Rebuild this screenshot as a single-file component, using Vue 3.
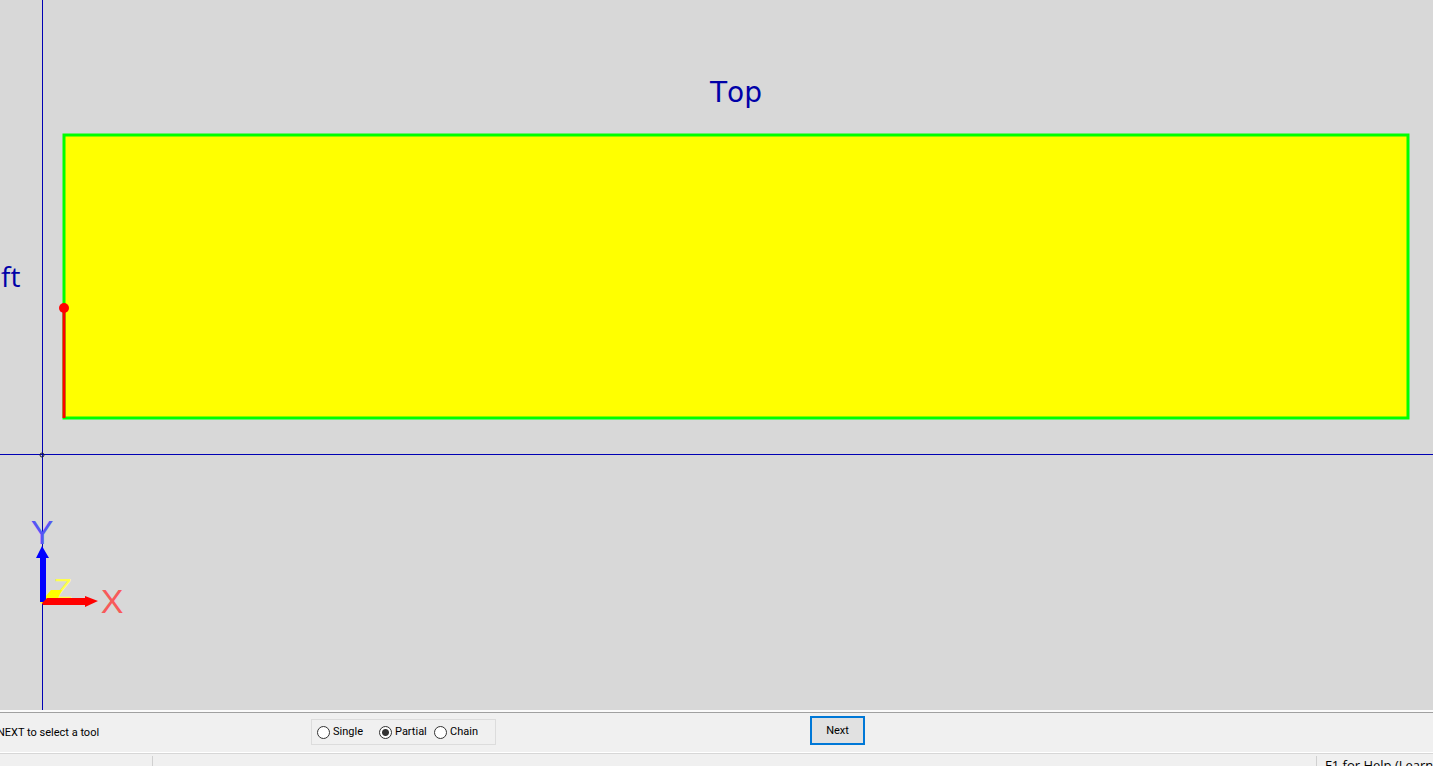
<script setup>
import { ref } from 'vue'

const mode = ref('Partial')
const modes = ['Single', 'Partial', 'Chain']
</script>

<template>
  <main class="app">
    <svg class="viewport" role="img" aria-label="Sheet view">
      <svg class="sheet" x="64" y="135" height="283">
        <rect class="panel" width="100%" height="100%" />
        <text class="label top" x="50%" y="-33" text-anchor="middle">Top</text>
        <line class="picked" x1="0" y1="173" x2="0" y2="283" />
        <circle cx="0" cy="173" r="5" fill="#f00" />
      </svg>
      <text class="label" x="1" y="287">ft</text>

      <g class="guides">
        <line x1="42.5" y1="0" x2="42.5" y2="100%" />
        <line x1="0" y1="454.5" x2="100%" y2="454.5" />
        <circle cx="42" cy="455" r="2" />
      </g>

      <text class="axis z" x="63" y="599">Z</text>
      <path d="M40 603L51 590H62L58 598L44 604Z" fill="#ff0" />
      <path d="M40 602V558H36L42 546L49 558H46V602Z" fill="#00f" />
      <path d="M42 603L47 598H85V596L98 601L85 607V605H43Z" fill="#f00" />
      <text class="axis y" x="42" y="544">Y</text>
      <text class="axis x" x="112" y="613">X</text>
    </svg>

    <form class="toolbar" @submit.prevent>
      <p class="prompt">NEXT to select a tool</p>
      <fieldset class="modes" aria-label="Selection mode">
        <label v-for="m in modes" :key="m" :class="['mode', m.toLowerCase()]">
          <input v-model="mode" type="radio" name="mode" :value="m" />{{ m }}
        </label>
      </fieldset>
      <button class="next" type="submit">Next</button>
    </form>

    <footer class="status">
      <div class="cell coords"></div>
      <div class="cell info"></div>
      <div class="cell help">F1 for Help (Learn</div>
    </footer>
  </main>
</template>

<style>
body {
  margin: 0;
}
</style>

<style scoped>
.app {
  display: flex;
  flex-direction: column;
  height: 100vh;
  overflow: hidden;
  background: #f0f0f0;
  color: #000;
  font: 11px/14px Roboto, sans-serif;
}
.viewport {
  display: block;
  flex: 1;
  min-height: 0;
  width: 100%;
  background: #d8d8d8;
}
.sheet {
  width: calc(100% - 89px);
  overflow: visible;
}
.panel {
  fill: #ff0;
  stroke: #0f0;
  stroke-width: 3px;
}
.picked {
  stroke: #f00;
  stroke-width: 3px;
}
.label {
  fill: #0000a8;
  font: 28px "Open Sans", sans-serif;
}
.top {
  font-family: "DejaVu Sans", sans-serif;
  font-kerning: none;
}
.axis {
  font: 34px "Liberation Sans", Arial, sans-serif;
  text-anchor: middle;
}
.x {
  fill: #f75a5a;
}
.y {
  fill: #5555f5;
}
.z {
  fill: #ffff4c;
  font-size: 30px;
}
.guides {
  fill: none;
  stroke: #0000b4;
  stroke-width: 1px;
}
.guides circle {
  stroke: #223;
}
.toolbar {
  display: flex;
  align-items: flex-start;
  box-sizing: border-box;
  height: 41px;
  border-top: 1px solid #a0a0a0;
  box-shadow: 0 -2px #fafafa;
  margin-top: 2px;
}
.prompt {
  width: 314px;
  margin: 13px 0 0 -3px;
  white-space: nowrap;
}
.modes {
  display: flex;
  align-items: center;
  box-sizing: border-box;
  width: 185px;
  height: 26px;
  margin: 6px 0 0;
  padding: 0 5px;
  border: 1px solid #dcdcdc;
}
.mode {
  display: flex;
  align-items: center;
  gap: 3px;
  line-height: 16px;
}
.single {
  width: 62px;
}
.partial {
  width: 55px;
}
.mode input {
  appearance: none;
  box-sizing: border-box;
  width: 13px;
  height: 13px;
  margin: 0;
  border: 1px solid #333;
  border-radius: 50%;
  background: #fff;
}
.mode input:checked {
  background: radial-gradient(circle, #333 3px, #fff 4px);
}
.next {
  width: 55px;
  height: 29px;
  margin: 3px 0 0 314px;
  padding: 0;
  border: 2px solid #0078d7;
  background: #e1e1e1;
  color: #000;
  font: inherit;
}
.status {
  display: flex;
  box-sizing: border-box;
  height: 13px;
  border-top: 1px solid #d7d7d7;
  box-shadow: 0 -1px #fff;
}
.cell {
  box-sizing: border-box;
  margin-top: 2px;
  border-right: 1px solid #d0d0d0;
}
.coords {
  width: 153px;
}
.info {
  flex: 1;
}
.help {
  width: 116px;
  padding-left: 8px;
  border: 0;
  font: 13px/18px "Open Sans", sans-serif;
  white-space: nowrap;
}
</style>
